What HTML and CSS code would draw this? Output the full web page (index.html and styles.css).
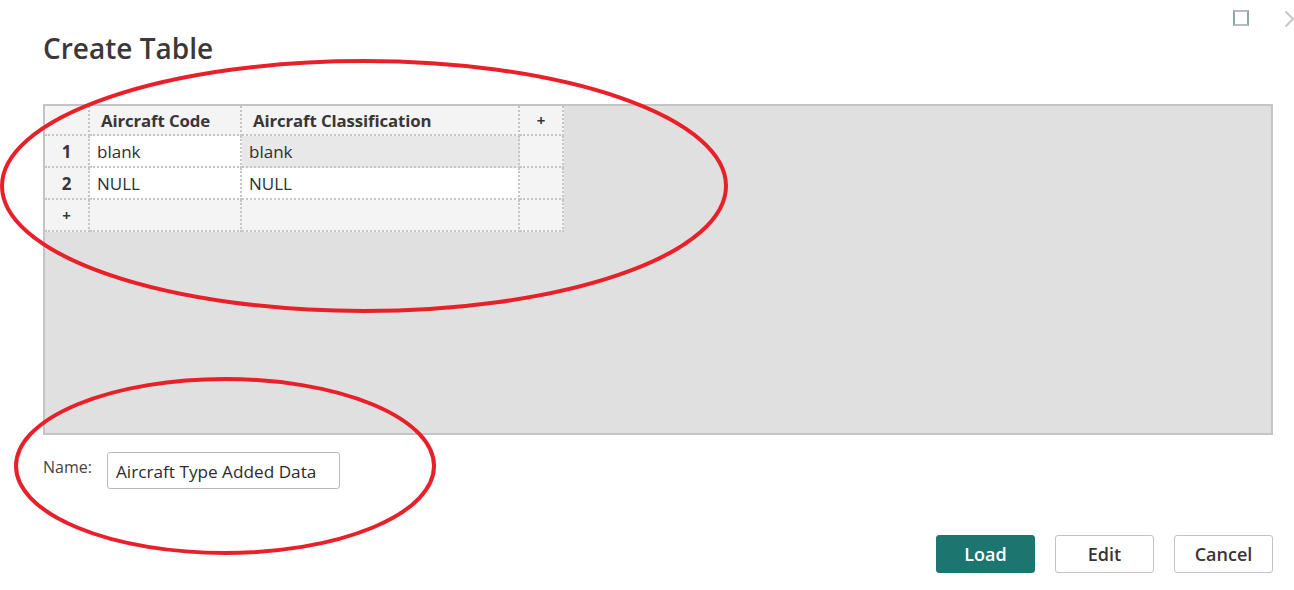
FILE: index.html
```html
<!DOCTYPE html>
<html>
<head>
<meta charset="utf-8">
<link rel="stylesheet" href="styles.css">
</head>
<body>
<div class="dialog">
  <div class="topbar">
    <span class="icon-square"></span>
    <svg class="icon-chevron" width="10" height="18" viewBox="0 0 10 18"><path d="M1.5 1.5 L9 9 L1.5 16.5" fill="none" stroke="#c8c8c8" stroke-width="2"/></svg>
  </div>
  <h1 class="title">Create Table</h1>
  <div class="grid-area">
    <table class="grid">
      <colgroup>
        <col class="c-num"><col class="c-a"><col class="c-b"><col class="c-add">
      </colgroup>
      <thead>
        <tr><th class="num"></th><th>Aircraft Code</th><th>Aircraft Classification</th><th class="plus">+</th></tr>
      </thead>
      <tbody>
        <tr><td class="num">1</td><td class="val">blank</td><td class="val sel">blank</td><td class="empty"></td></tr>
        <tr><td class="num">2</td><td class="val">NULL</td><td class="val">NULL</td><td class="empty"></td></tr>
        <tr><td class="num plus">+</td><td class="empty"></td><td class="empty"></td><td class="empty"></td></tr>
      </tbody>
    </table>
  </div>
  <div class="name-row">
    <label class="name-label">Name:</label>
    <div class="name-input">Aircraft Type Added Data</div>
  </div>
  <div class="actions">
    <button class="btn primary">Load</button>
    <button class="btn">Edit</button>
    <button class="btn">Cancel</button>
  </div>
</div>
<svg class="annotations" width="1294" height="590" viewBox="0 0 1294 590">
  <ellipse cx="364" cy="186" rx="362" ry="125" fill="none" stroke="#e8202a" stroke-width="4"/>
  <ellipse cx="225" cy="466" rx="209" ry="87" fill="none" stroke="#e8202a" stroke-width="4"/>
</svg>
</body>
</html>
```
FILE: styles.css
```css
* { box-sizing: border-box; }
html, body {
  margin: 0;
  padding: 0;
  background: #ffffff;
  width: 1294px;
  height: 590px;
  overflow: hidden;
}
body {
  font-family: "Open Sans", "Noto Sans", sans-serif;
  color: #333;
  position: relative;
}
.dialog {
  display: flex;
  flex-direction: column;
  padding: 0 21px 0 43px;
}
.topbar {
  display: flex;
  justify-content: flex-end;
  align-items: flex-start;
  gap: 35px;
  height: 27px;
  padding-top: 10px;
  margin-right: -21px;
}
.icon-square {
  width: 16px;
  height: 16px;
  border: 2px solid #b9bcbe;
  border-left-color: #8fa8a4;
  border-right-color: #8fa8a4;
}
.icon-chevron { display: block; }
.title {
  margin: 3px 0 0 0;
  font-size: 28px;
  font-weight: 600;
  line-height: 36px;
  color: #3d3838;
  letter-spacing: 0;
}
.grid-area {
  margin-top: 38px;
  height: 331px;
  background: #e0e0e0;
  border: 2px solid #c2c4c6;
}
.grid {
  border-collapse: separate;
  border-spacing: 0;
  table-layout: fixed;
  width: 518px;
  font-size: 17px;
}
.c-num { width: 45px; }
.c-a { width: 152px; }
.c-b { width: 278px; }
.c-add { width: 44px; }
.grid th, .grid td {
  height: 32px;
  padding: 0 0 0 10px;
  background: #f4f4f4;
  border-right: 2px dotted #c6c6c6;
  border-bottom: 2px dotted #c6c6c6;
  text-align: left;
  white-space: nowrap;
  overflow: hidden;
}
.grid th {
  font-weight: 700;
  font-size: 16.8px;
  color: #3a3636;
  height: 30px;
  padding-left: 11px;
  letter-spacing: -0.1px;
}
.grid td.val {
  background: #ffffff;
  padding-left: 7px;
  color: #2e3030;
}
.grid td.val.sel {
  background: #e8e8e8;
}
.grid .num {
  text-align: center;
  padding: 0;
  font-weight: 700;
  color: #3a3636;
}
.grid th.plus, .grid td.plus {
  text-align: center;
  padding: 0;
  font-weight: 700;
  font-size: 15px;
  color: #3a3636;
}
.name-row {
  display: flex;
  align-items: flex-start;
  margin-top: 17px;
}
.name-label {
  font-size: 16px;
  color: #444;
  width: 64px;
  padding-top: 4px;
}
.name-input {
  width: 233px;
  height: 37px;
  border: 1px solid #b8babc;
  border-radius: 3px;
  padding: 0 0 0 8px;
  font-size: 17.2px;
  line-height: 37px;
  color: #2e2b2b;
}
.actions {
  display: flex;
  justify-content: flex-end;
  gap: 20px;
  margin-top: 46px;
  margin-right: 0;
}
.btn {
  width: 99px;
  height: 38px;
  border: 1px solid #c0c2c4;
  border-radius: 3px;
  background: #ffffff;
  font-family: "Open Sans", "Noto Sans", sans-serif;
  font-size: 18px;
  font-weight: 600;
  color: #3a3535;
  padding: 0;
}
.btn.primary {
  background: #1c756f;
  border-color: #1c756f;
  color: #ffffff;
}
.annotations {
  position: absolute;
  left: 0;
  top: 0;
  pointer-events: none;
}
```
